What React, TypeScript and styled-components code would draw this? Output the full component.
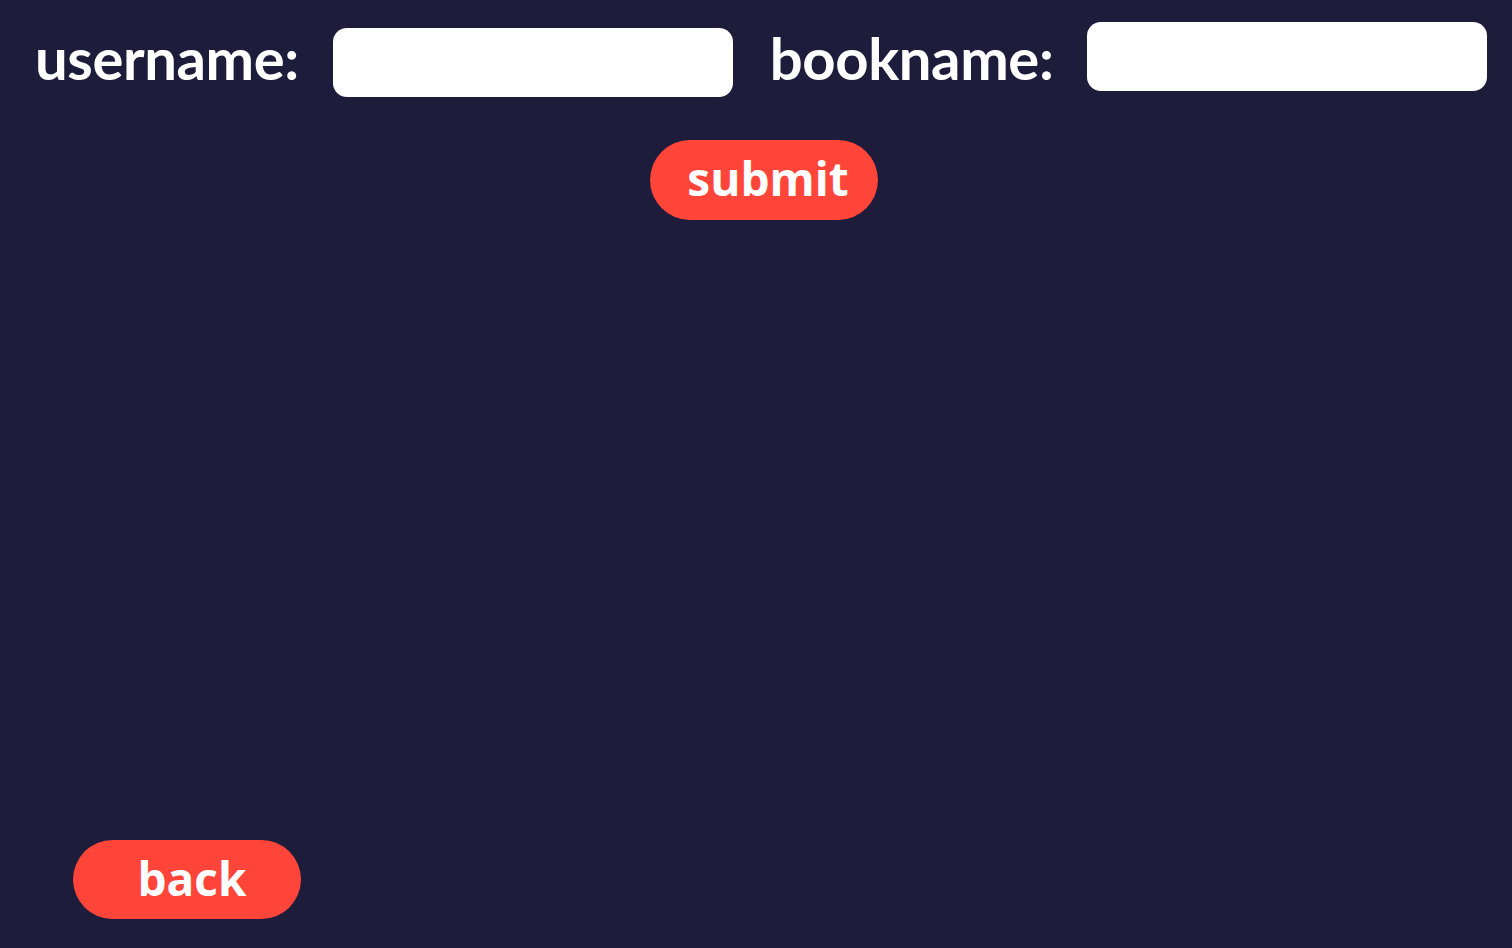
import React, { useState } from "react";
import styled, { createGlobalStyle } from "styled-components";

const GlobalStyle = createGlobalStyle`
  html, body {
    margin: 0;
    padding: 0;
    background: #1d1c3a;
  }
  * {
    box-sizing: border-box;
  }
`;

const App: React.FC = () => {
  const [form, setForm] = useState({ username: "", bookname: "" });

  const onInputChange = (e: React.ChangeEvent<HTMLInputElement>) => {
    setForm({ ...form, [e.target.name]: e.target.value });
  };

  return (
    <Page>
      <GlobalStyle />
      <FormRow>
        <Label htmlFor="username">username:</Label>
        <TextBox
          id="username"
          name="username"
          value={form.username}
          onChange={onInputChange}
          $shift={6}
        />
        <Label htmlFor="bookname" $gapLeft={37}>
          bookname:
        </Label>
        <TextBox
          id="bookname"
          name="bookname"
          value={form.bookname}
          onChange={onInputChange}
          $shift={0}
        />
      </FormRow>
      {/* buttons */}
      <SubmitRow>
        <PillButton type="button">submit</PillButton>
      </SubmitRow>
      <BackRow>
        <PillButton type="button" $wide>
          back
        </PillButton>
      </BackRow>
    </Page>
  );
};

export default App;

const Page = styled.div`
  height: 948px;
  display: flex;
  flex-direction: column;
  background: #1d1c3a;
  overflow: hidden;
`;

const FormRow = styled.div`
  display: flex;
  align-items: flex-start;
  padding: 22px 0 0 35px;
  height: 100px;
`;

const Label = styled.label<{ $gapLeft?: number }>`
  font-family: Lato, "Open Sans", sans-serif;
  font-weight: 700;
  font-size: 58px;
  letter-spacing: -0.4px;
  line-height: 72px;
  color: #ffffff;
  margin-left: ${(p) => p.$gapLeft || 0}px;
  margin-right: 34px;
  white-space: nowrap;
`;

const TextBox = styled.input<{ $shift: number }>`
  width: 400px;
  height: 69px;
  margin-top: ${(p) => p.$shift}px;
  border: none;
  border-radius: 14px;
  background: #ffffff;
  outline: none;
  padding: 0 16px;
  font-family: Lato, sans-serif;
  font-size: 28px;
`;

const SubmitRow = styled.div`
  display: flex;
  justify-content: center;
  padding: 40px 0 0 16px;
  flex: 1;
  align-items: flex-start;
`;

const BackRow = styled.div`
  display: flex;
  padding: 0 0 29px 73px;
`;

const PillButton = styled.button<{ $wide?: boolean }>`
  width: 228px;
  height: ${(p) => (p.$wide ? 79 : 80)}px;
  border: none;
  border-radius: 40px;
  background: #ff453a;
  color: #ffffff;
  font-family: "Open Sans", Lato, sans-serif;
  font-weight: 700;
  font-size: 46px;
  line-height: 1;
  padding: 0 0 4px ${(p) => (p.$wide ? 10 : 8)}px;
  cursor: pointer;
`;
